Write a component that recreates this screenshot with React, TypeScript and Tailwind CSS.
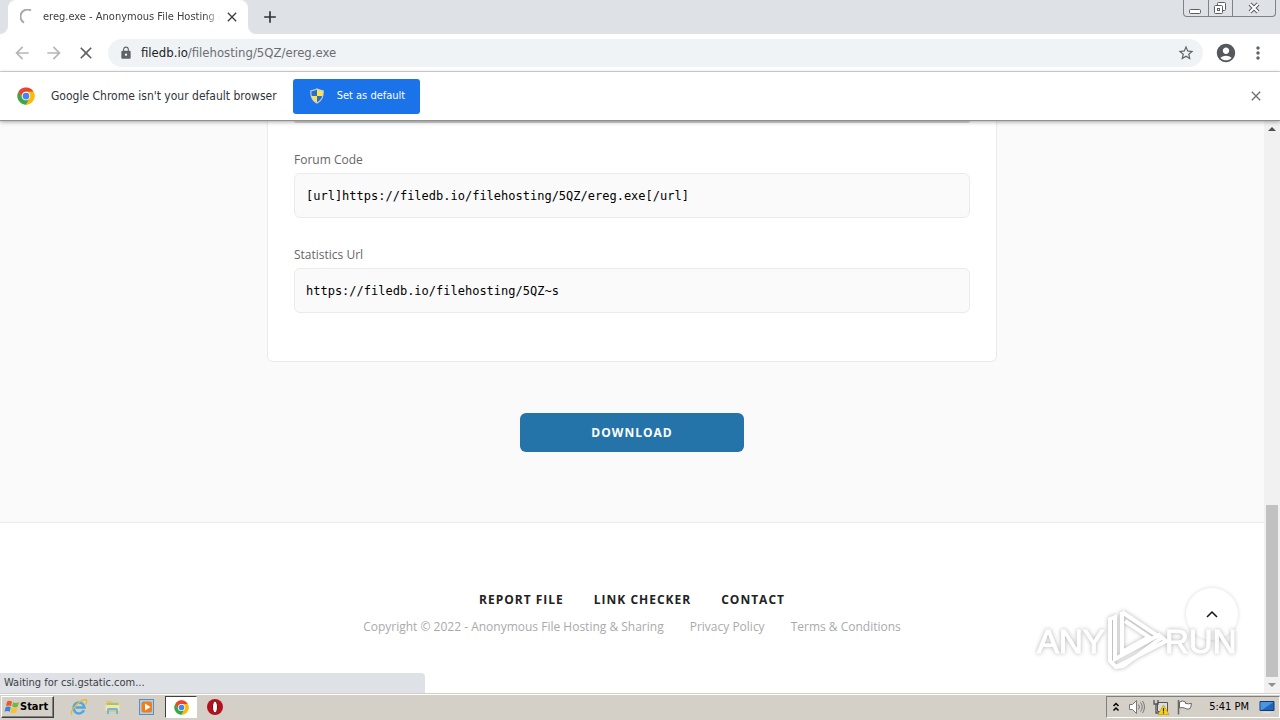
import React from "react";
import {
  MdArrowBack,
  MdArrowForward,
  MdClose,
  MdLock,
  MdAdd,
  MdStarBorder,
  MdAccountCircle,
  MdMoreVert,
} from "react-icons/md";

type FieldProps = {
  id: string;
  label: string;
  value: string;
};

const footerLinks = ["REPORT FILE", "LINK CHECKER", "CONTACT"];
const legalLinks = ["Privacy Policy", "Terms & Conditions"];

function ChromeLogo({ className }: { className: string }) {
  return (
    <svg viewBox="0 0 48 48" className={className}>
      <circle cx="24" cy="24" r="23" fill="#fbbc05" />
      <path d="M4.1 12.5A23 23 0 0 1 43.9 12.5H24a11.5 11.5 0 0 0-10 17.2z" fill="#ea4335" />
      <path d="M4.1 12.5 14 29.7a11.5 11.5 0 0 0 20 0L24 47A23 23 0 0 1 4.1 12.5z" fill="#34a853" />
      <path d="M24 12.5h19.9A23 23 0 0 1 24 47l10-17.3a11.5 11.5 0 0 0-10-17.2z" fill="#fbbc05" />
      <circle cx="24" cy="24" r="11.5" fill="#fff" />
      <circle cx="24" cy="24" r="9" fill="#4285f4" />
    </svg>
  );
}

function ShieldIcon() {
  return (
    <svg viewBox="0 0 16 16" className="size-4">
      <path d="M8 .3C10 1.500 12 2 14.700 2.200c.3 6-1 10.300-6.700 13.500C2.300 12.500 1 8.200 1.300 2.200 4 2 6 1.500 8 .3z" fill="#c9d2d8" />
      <path d="M8 1.600V8H2.800c-.4-1.500-.5-3-.4-4.700C4.500 3 6.500 2.500 8 1.600z" fill="#2d6fc4" />
      <path d="M8 1.600V8h5.200c.4-1.500.5-3 .4-4.700C11.500 3 9.500 2.500 8 1.600z" fill="#ffe14a" />
      <path d="M8 8v6.300C4.900 12.500 3.400 10.500 2.800 8z" fill="#ffe14a" />
      <path d="M8 8v6.300c3.100-1.800 4.600-3.800 5.200-6.300z" fill="#2d6fc4" />
    </svg>
  );
}

function TabStrip() {
  return (
    <header className="flex h-[34px] shrink-0 justify-between bg-[#dee1e6] pl-2">
      <div className="flex items-center">
        <div className="relative flex h-full w-60 items-center rounded-t-lg bg-white pl-3 pr-2">
          <svg viewBox="0 0 8 8" className="absolute -left-2 bottom-0 size-2">
            <path d="M8 0v8H0a8 8 0 0 0 8-8z" fill="#fff" />
          </svg>
          <svg viewBox="0 0 8 8" className="absolute -right-2 bottom-0 size-2">
            <path d="M0 0v8h8a8 8 0 0 1-8-8z" fill="#fff" />
          </svg>
          {/* loading spinner */}
          <svg viewBox="0 0 16 16" className="size-4 shrink-0">
            <path d="M11 1.500A7 7 0 0 0 4 13.700" fill="none" stroke="#a5a8ad" strokeWidth="2" />
          </svg>
          <span className="ml-[7px] flex-1 overflow-hidden whitespace-nowrap text-[11px] text-[#3c4043] [mask-image:linear-gradient(to_right,black_92%,transparent)]">
            ereg.exe - Anonymous File Hosting &amp; Sharing
          </span>
          <button aria-label="Close tab" className="ml-1 text-[#3c4043]">
            <MdClose className="size-4" />
          </button>
        </div>
        <button aria-label="New tab" className="ml-3 text-[#30343a]">
          <MdAdd className="size-5" />
        </button>
      </div>

      {/* window buttons */}
      <div className="mr-1 flex h-[17px] w-[93px] rounded-b-[4px] border border-t-0 border-[#7d828b]">
        <button aria-label="Minimize" className="flex flex-1 items-center justify-center border-r border-[#7d828b]">
          <svg viewBox="0 0 13 13" className="size-[13px]">
            <rect x="0.500" y="7.500" width="11" height="4" rx="1" fill="#fff" stroke="#5a5e66" />
          </svg>
        </button>
        <button aria-label="Restore" className="flex flex-1 items-center justify-center border-r border-[#7d828b]">
          <svg viewBox="0 0 14 14" className="size-[14px]" fill="#fff" stroke="#5a5e66">
            <rect x="4.500" y="1.500" width="8" height="8" rx="1" />
            <rect x="1.500" y="4.500" width="8" height="8" rx="1" />
            <rect x="4.500" y="7.500" width="2" height="2" />
          </svg>
        </button>
        <button aria-label="Close" className="flex w-[42px] items-center justify-center">
          <svg viewBox="0 0 14 12" className="h-3 w-[14px]" fill="none">
            <path d="M3 2l8 8M11 2l-8 8" stroke="#5a5e66" strokeWidth="4" />
            <path d="M3 2l8 8M11 2l-8 8" stroke="#fff" strokeWidth="2" />
          </svg>
        </button>
      </div>
    </header>
  );
}

function Toolbar() {
  return (
    <div className="flex h-[38px] shrink-0 items-center border-b border-[#d5d7da] bg-white px-3">
      <div className="flex gap-3 text-[#b4b6b9]">
        <button aria-label="Back">
          <MdArrowBack className="size-5" />
        </button>
        <button aria-label="Forward">
          <MdArrowForward className="size-5" />
        </button>
        <button aria-label="Stop" className="text-[#5f6368]">
          <MdClose className="size-5" />
        </button>
      </div>
      <div className="ml-3 flex h-7 flex-1 items-center rounded-full bg-[#f0f3f5] pl-[11px] pr-2">
        <MdLock className="size-[14px] text-[#5f6368]" />
        <a href="#" className="ml-2 flex-1 text-[13px] text-[#6a6e73]">
          <span className="text-[#202124]">filedb.io</span>/filehosting/5QZ/ereg.exe
        </a>
        <button aria-label="Bookmark" className="text-[#5f6368]">
          <MdStarBorder className="size-[18px]" />
        </button>
      </div>
      <button aria-label="Profile" className="ml-3 text-[#55595e]">
        <MdAccountCircle className="size-[22px]" />
      </button>
      <button aria-label="Menu" className="ml-[11px] text-[#5f6368]">
        <MdMoreVert className="size-5" />
      </button>
    </div>
  );
}

function DefaultBrowserBar() {
  return (
    <div className="z-10 flex h-[49px] shrink-0 items-center border-b border-[#909090] bg-white pl-[17px] pr-4 shadow-[0_1px_4px_rgba(0,0,0,0.35)]">
      <ChromeLogo className="size-[18px]" />
      <span className="ml-4 text-xs text-[#303438]">Google Chrome isn't your default browser</span>
      <button className="ml-4 flex h-[35px] w-[127px] items-center gap-3 rounded-[3px] bg-[#1a73e8] pl-4 text-[11px] text-white">
        <ShieldIcon />
        Set as default
      </button>
      <button aria-label="Dismiss" className="ml-auto text-[#6b6f74]">
        <MdClose className="size-4" />
      </button>
    </div>
  );
}

function Field({ id, label, value }: FieldProps) {
  return (
    <div className="flex flex-col gap-[3px]">
      <label htmlFor={id} className="text-xs leading-5 text-[#666]">
        {label}
      </label>
      <input
        id={id}
        type="text"
        readOnly
        defaultValue={value}
        className="h-[45px] w-full rounded-md border border-[#ebebeb] bg-[#fafafa] px-[11px] font-['DejaVu_Sans_Mono',monospace] text-xs text-black outline-none"
      />
    </div>
  );
}

function Watermark() {
  return (
    <svg
      viewBox="0 0 200 68"
      className="pointer-events-none absolute bottom-[18px] right-[45px] h-[68px] w-[200px] [filter:drop-shadow(0_0_2px_rgba(0,0,0,0.3))]"
    >
      <g fontFamily="'Liberation Sans',sans-serif" fontSize="33" fill="#fff" stroke="#fff">
        <text x="2" y="46">ANY</text>
        <text x="130" y="46">RUN</text>
      </g>
      <g fill="none" stroke="#fff" strokeWidth="4">
        <path d="M87 5 126 31 88 59 81 60" />
        <path d="M87 5v40l27-15-24-16" />
        <path d="M80 10l-5 2v42l6 6 50-26-7-6-44 24z" />
      </g>
    </svg>
  );
}

function Scrollbar() {
  return (
    <div className="flex w-4 shrink-0 flex-col bg-[#f1f1f1]">
      <svg viewBox="0 0 16 16" className="size-4">
        <path d="M4 10l4-4 4 4z" fill="#505050" />
      </svg>
      <div className="grow-[368]"></div>
      <div className="mx-0.5 grow-[172] bg-[#c1c1c1]"></div>
      <svg viewBox="0 0 16 16" className="size-4">
        <path d="M4 6l4 4 4-4z" fill="#909090" />
      </svg>
    </div>
  );
}

function Page() {
  return (
    <div className="flex min-w-0 flex-1 flex-col bg-[#fafafa] font-['Open_Sans',sans-serif]">
      <main className="flex flex-col items-center pb-[70px]">
        <div className="flex w-full max-w-[730px] flex-col gap-[27px] rounded-b-md border border-t-0 border-[#ebebeb] bg-white px-[26px] pb-12">
          {/* end of the field that is scrolled out of view */}
          <div className="h-0.5 rounded-b-md bg-[#d8d8d8]"></div>
          <Field id="forum-code" label="Forum Code" value="[url]https://filedb.io/filehosting/5QZ/ereg.exe[/url]" />
          <Field id="stats-url" label="Statistics Url" value="https://filedb.io/filehosting/5QZ~s" />
        </div>
        <button className="mt-[51px] h-[39px] w-56 rounded-md bg-[#2574a9] text-xs font-bold tracking-[1px] text-white">
          DOWNLOAD
        </button>
      </main>

      <footer className="flex flex-1 flex-col items-center border-t border-[#ebebeb] bg-white pt-[67px]">
        <nav className="flex gap-[30px] text-xs font-bold leading-5 tracking-[1px] text-[#222]">
          {footerLinks.map((link) => (
            <a key={link} href="#">
              {link}
            </a>
          ))}
        </nav>
        <div className="mt-[7px] flex gap-[26px] text-xs leading-5 text-[#aaa]">
          <span>Copyright © 2022 - Anonymous File Hosting &amp; Sharing</span>
          {legalLinks.map((link) => (
            <a key={link} href="#">
              {link}
            </a>
          ))}
        </div>
      </footer>
    </div>
  );
}

function Taskbar() {
  return (
    <div className="flex h-[27px] shrink-0 items-center border-t border-[#d4d0c8] bg-[#d4d0c8] pl-px text-[11px] text-black shadow-[inset_0_1px_0_#fff]">
      <button className="flex h-[22px] w-[53px] items-center border border-b-[#404040] border-l-white border-r-[#404040] border-t-white pl-0.5 font-bold shadow-[inset_-1px_-1px_0_#808080]">
        <svg viewBox="0 0 16 16" className="size-4 shrink-0">
          <path d="M3 2.500c2-1 3.500-.8 5 .2L7 7.200c-1.500-1-3-1-5-.2z" fill="#e8592b" />
          <path d="M9 3.200c2 1 3.500 1 6 0l-1.300 4.500c-2 1-4 .9-5.700-.1z" fill="#76b83f" />
          <path d="M1.700 8c2-.9 3.500-.8 5 .2l-1 4.500c-1.700-1-3.200-1-5.200-.2z" fill="#3c82d6" />
          <path d="M7.700 8.700c2 1 3.700 1 5.700.1l-1.200 4.500c-2 .9-3.800.9-5.700-.1z" fill="#f7c325" />
        </svg>
        Start
      </button>

      {/* pinned programs */}
      <div className="ml-[9px] flex gap-0.5">
        <button aria-label="Internet Explorer" className="flex h-[22px] w-8 items-center justify-center">
          <svg viewBox="0 0 18 18" className="size-[18px]" fill="none">
            <path d="M14 12.300A5.500 5.500 0 1 1 14.500 9.500H5.500" stroke="#4aa8e4" strokeWidth="2.500" />
            <path d="M2 16.500C-1 13 9 2.500 15 1.500c3-.3 1.500 4 .5 5" stroke="#e8b83a" strokeWidth="1.300" />
          </svg>
        </button>
        <button aria-label="Explorer" className="flex h-[22px] w-8 items-center justify-center">
          <svg viewBox="0 0 18 18" className="size-[18px]">
            <path d="M2 3h6l1 1.500h6V14H2z" fill="#e9c661" />
            <path d="M3 5h11v2H3z" fill="#8fc98c" />
            <path d="M1.500 7h14v6h-14z" fill="#f8e5a0" />
            <path d="M3 16v-4.500q0-1.500 1.500-1.500h8q1.500 0 1.500 1.500V16h-2v-3.500H5V16z" fill="#6eb7e0" />
          </svg>
        </button>
        <button aria-label="Media Player" className="flex h-[22px] w-8 items-center justify-center">
          <svg viewBox="0 0 18 18" className="size-[18px]">
            <rect x="1.500" y="1.500" width="14" height="15" fill="#a9d0ee" stroke="#5791c4" />
            <rect x="3.500" y="3.500" width="10.500" height="11" rx="2" fill="#f07d17" />
            <path d="M7 5.500v7L12.500 9z" fill="#fff" />
          </svg>
        </button>
        <button
          aria-label="Google Chrome"
          className="flex h-[22px] w-8 items-center justify-center border border-b-white border-l-[#404040] border-r-white border-t-[#404040] bg-white"
        >
          <ChromeLogo className="size-[15px]" />
        </button>
        <button aria-label="Opera" className="flex h-[22px] w-8 items-center justify-center">
          <svg viewBox="0 0 18 18" className="size-[18px]">
            <circle cx="9" cy="9" r="8" fill="#b3121d" />
            <ellipse cx="9" cy="9" rx="2.500" ry="6" fill="#fff" stroke="#760b13" />
          </svg>
        </button>
      </div>

      {/* tray */}
      <div className="ml-auto flex h-[22px] w-[174px] items-center border border-b-white border-l-[#808080] border-r-white border-t-[#808080] pl-[5px]">
        <button aria-label="Show hidden icons">
          <svg viewBox="0 0 8 12" className="h-3 w-2" fill="none" stroke="#000" strokeWidth="1.500">
            <path d="M1.500 5 4 2.500 6.500 5M1.500 9.500 4 7l2.500 2.500" />
          </svg>
        </button>
        <svg viewBox="0 0 18 16" className="ml-2 h-4 w-[18px]" fill="none" stroke="#777">
          <path d="M1.500 5.500h3l4-4v13l-4-4h-3z" fill="#fff" />
          <path d="M10.500 5.500q2 2.500 0 5M12.500 3.500q3.500 4.500 0 9M14.500 2q4 6 0 12" />
        </svg>
        <svg viewBox="0 0 18 16" className="ml-1.5 h-4 w-[18px]">
          <path d="M5.500 3.500h10v9h-10z" fill="#ddd" stroke="#555" />
          <path d="M2 1v4h4V1M4 5v9h3" fill="none" stroke="#555" strokeWidth="1.300" />
          <path d="M11.500 6 17 15.500H6z" fill="#fbd116" stroke="#b99300" strokeWidth=".6" />
          <path d="M11.500 9v3.500M11.500 13.300v1.200" stroke="#333" strokeWidth="1.200" />
        </svg>
        <svg viewBox="0 0 18 16" className="ml-1.5 h-4 w-[18px]">
          <path d="M3.500 3q3-2 6 0v1.500q3 .5 6 0-.5 4-2 5.500-3 .5-5-1-2-1-5 0z" fill="#fff" stroke="#666" />
          <path d="M2.500 1v14.500" stroke="#666" strokeWidth="1.500" />
        </svg>
        <span className="ml-auto whitespace-nowrap">5:41 PM</span>
        <svg viewBox="0 0 16 16" className="ml-2.5 mr-1 size-4">
          <path d="M1 2.500h14v9H1z" fill="#1e66bd" stroke="#123a70" />
          <path d="M1.500 3h13L3 11H1.500z" fill="#4b95e0" />
          <path d="M4 13.500h8" stroke="#ddd" strokeWidth="1.500" />
        </svg>
      </div>
    </div>
  );
}

function App() {
  return (
    <div className="flex h-screen flex-col overflow-hidden bg-white font-['DejaVu_Sans_Condensed','DejaVu_Sans',sans-serif]">
      <TabStrip />
      <Toolbar />
      <DefaultBrowserBar />
      <div className="relative flex min-h-0 flex-1">
        <Page />
        <Scrollbar />
        <button
          aria-label="Back to top"
          className="absolute bottom-[53px] right-[42px] flex size-[52px] items-center justify-center rounded-full bg-white shadow-[0_0_4px_rgba(0,0,0,0.15)]"
        >
          <svg viewBox="0 0 14 8" className="h-2 w-[14px]" fill="none" stroke="#111" strokeWidth="1.500">
            <path d="M2 7l5-5 5 5" />
          </svg>
        </button>
        <Watermark />
        <div className="absolute bottom-0 left-0 h-5 w-[425px] rounded-tr-[4px] bg-[#dee1e6] pl-1 text-[11px] leading-5 text-[#3c4043]">
          Waiting for csi.gstatic.com...
        </div>
      </div>
      <Taskbar />
    </div>
  );
}

export default App;
